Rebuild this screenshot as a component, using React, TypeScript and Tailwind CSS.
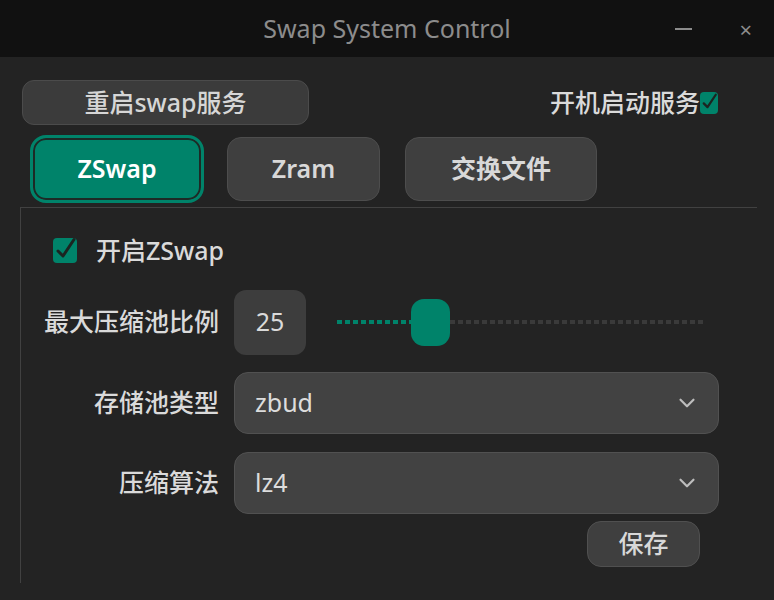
import { ChevronDown } from "lucide-react";

const font = { fontFamily: '"Noto Sans", "Noto Sans CJK SC", sans-serif' };

function CheckBox({ size = "big" }: { size?: "big" | "small" }) {
  const box = size === "big" ? "h-[25px] w-[24px]" : "h-[22px] w-[18px]";
  return (
    <span className={`relative inline-block ${box} rounded-[4px] bg-[#00836a]`}>
      <svg viewBox="0 0 24 24" className="absolute inset-0 h-full w-full overflow-visible">
        <path
          d="M5 12.5 L10 17.5 L21 1"
          fill="none"
          stroke="#1b2421"
          strokeWidth="3"
          strokeLinecap="round"
          strokeLinejoin="round"
        />
      </svg>
    </span>
  );
}

function Combo({ value }: { value: string }) {
  return (
    <div className="flex h-[62px] flex-1 items-center justify-between rounded-[14px] border border-[#515151] bg-[#424242] pl-[20px] pr-[18px]">
      <span className="text-[25px] text-[#dcdcdc]">{value}</span>
      <ChevronDown className="h-[26px] w-[26px] text-[#bdbdbd]" strokeWidth={2} />
    </div>
  );
}

export default function App() {
  return (
    <div className="h-[600px] w-[774px] overflow-hidden bg-[#232323] text-[#dadada]" style={font}>
      {/* Title bar */}
      <div className="relative flex h-[57px] items-center justify-center bg-[#111111]">
        <span className="text-[25px] text-[#8c8c8c]">Swap System Control</span>
        <div className="absolute right-[22px] top-0 flex h-full items-center gap-[47px] text-[#8c8c8c]">
          <span className="block h-[2px] w-[17px] bg-[#8c8c8c]" />
          <span className="text-[22px] leading-none">×</span>
        </div>
      </div>

      {/* Top row */}
      <div className="mt-[23px] flex items-center justify-between pl-[22px] pr-[56px]">
        <button className="h-[45px] w-[287px] rounded-[12px] border border-[#4b4b4b] bg-[#3b3b3b] text-[25px] font-medium text-[#d6d6d6]">
          重启swap服务
        </button>
        <div className="flex items-center">
          <span className="text-[25px] font-medium">开机启动服务</span>
          <CheckBox size="small" />
        </div>
      </div>

      {/* Tabs */}
      <div className="mt-[10px] flex items-center pl-[30px]">
        <button className="h-[68px] w-[174px] rounded-[16px] border-[3px] border-[#00836a] bg-[#00836a] text-[25px] font-semibold text-white shadow-[inset_0_0_0_2px_#1d2a26]">
          ZSwap
        </button>
        <button className="ml-[23px] h-[64px] w-[153px] rounded-[14px] border border-[#4d4d4d] bg-[#3f3f3f] text-[25px] font-semibold text-[#d8d8d8]">
          Zram
        </button>
        <button className="ml-[25px] h-[64px] w-[192px] rounded-[14px] border border-[#4d4d4d] bg-[#3f3f3f] text-[25px] font-semibold text-[#d8d8d8]">
          交换文件
        </button>
      </div>

      {/* Panel */}
      <div className="ml-[20px] mr-[17px] mt-[4px] h-[376px] border-l border-t border-[#414141]">
        <div className="ml-[32px] mt-[24px] flex items-center gap-[19px]">
          <CheckBox />
          <span className="text-[25px] font-medium">开启ZSwap</span>
        </div>

        <div className="mt-[20px] flex items-center">
          <span className="w-[198px] text-right text-[25px] font-medium">最大压缩池比例</span>
          <div className="ml-[15px] flex h-[65px] w-[72px] items-center justify-center rounded-[12px] bg-[#3d3d3d] text-[25px]">
            25
          </div>
          <div className="relative ml-[31px] flex h-[47px] w-[368px] items-center">
            <div className="h-[4px] w-[74px] bg-[repeating-linear-gradient(90deg,#00836a_0_5px,transparent_5px_8px)]" />
            <div className="h-[47px] w-[39px] rounded-[13px] bg-[#00836a]" />
            <div className="h-[4px] flex-1 bg-[repeating-linear-gradient(90deg,#3a3a3a_0_5px,transparent_5px_8px)]" />
          </div>
        </div>

        <div className="mt-[17px] flex items-center pr-[38px]">
          <span className="w-[198px] text-right text-[25px] font-medium">存储池类型</span>
          <div className="ml-[15px] flex flex-1">
            <Combo value="zbud" />
          </div>
        </div>

        <div className="mt-[18px] flex items-center pr-[38px]">
          <span className="w-[198px] text-right text-[25px] font-medium">压缩算法</span>
          <div className="ml-[15px] flex flex-1">
            <Combo value="lz4" />
          </div>
        </div>

        <div className="mt-[7px] flex justify-end pr-[57px]">
          <button className="h-[46px] w-[113px] rounded-[14px] border border-[#505050] bg-[#3f3f3f] text-[25px] font-medium text-[#d8d8d8]">
            保存
          </button>
        </div>
      </div>
    </div>
  );
}
